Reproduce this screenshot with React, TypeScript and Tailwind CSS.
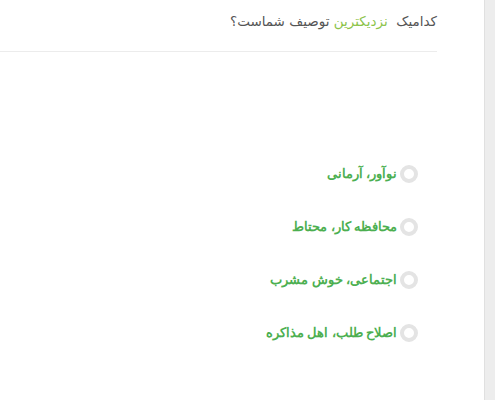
export default function App() {
  const options = ["نوآور، آرمانی", "محافظه کار، محتاط", "اجتماعی، خوش مشرب", "اصلاح طلب، اهل مذاکره"];
  return (
    <div className="flex h-[400px] w-[495px] bg-white">
      <div dir="rtl" className="flex w-[484px] flex-col pr-[47px]">
        <div
          className="flex h-[52px] items-start border-b border-[#ececec] pt-[11px] text-[13.5px] text-[#555]"
          style={{ fontFamily: '"DejaVu Sans", sans-serif' }}
        >
          <span>
            کدامیک&nbsp; <span className="text-[#8bc34a]">نزدیکترین</span> توصیف شماست؟
          </span>
        </div>
        <div className="flex flex-col gap-[31px] pt-[111px]" style={{ fontFamily: '"Noto Sans", sans-serif' }}>
          {options.map((o) => (
            <label key={o} className="flex h-[22px] items-center gap-[3px] pr-[19px]">
              <span className="h-[18px] w-[18px] shrink-0 rounded-full border-4 border-[#e4e4e4] bg-white" />
              <span className="text-[12.5px] font-bold text-[#4caf50]">{o}</span>
            </label>
          ))}
        </div>
      </div>
      <div className="w-[11px] border-l border-[#e0e0e0] bg-[#ededed]" />
    </div>
  );
}
